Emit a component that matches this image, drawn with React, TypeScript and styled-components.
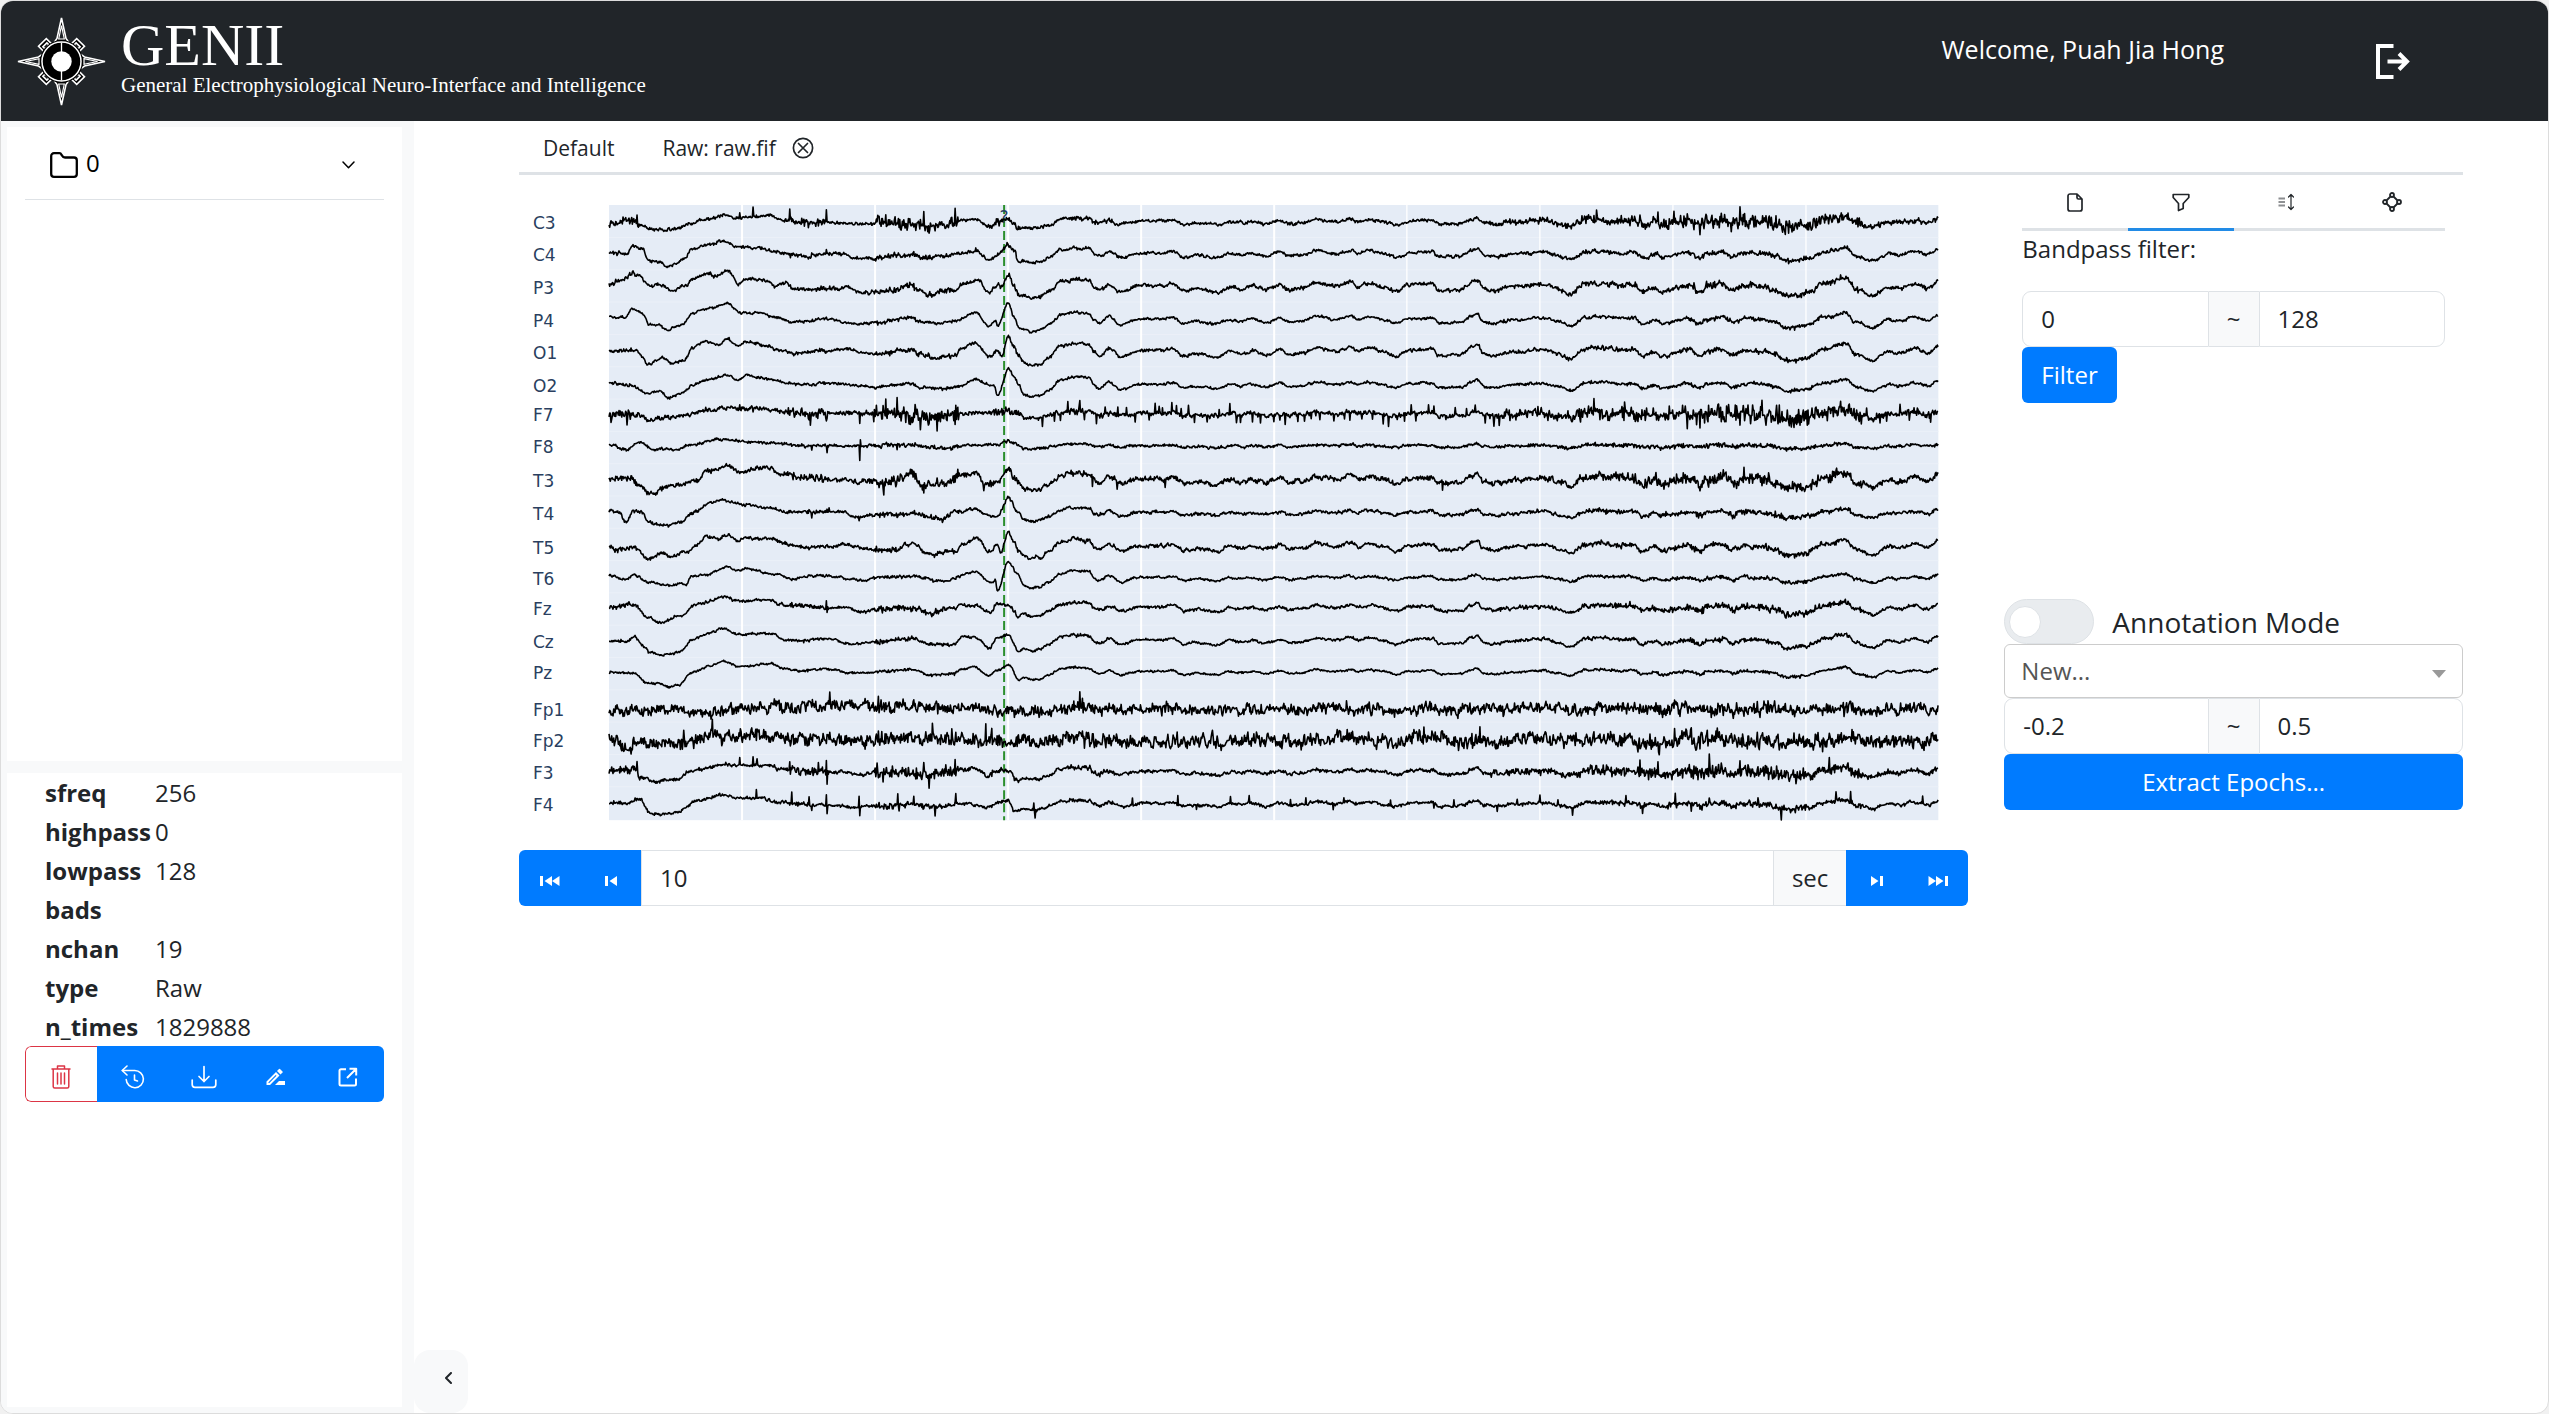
import React, { useState } from "react";
import styled, { createGlobalStyle, css } from "styled-components";

const GlobalStyle = createGlobalStyle`
  *, *::before, *::after { box-sizing: border-box; }
  body {
    margin: 0;
    background: #f1f1f1;
    color: #212529;
    font-family: "Open Sans", "Noto Sans", sans-serif;
    font-size: 24px;
    line-height: 36px;
  }
  button, input, select { font: inherit; color: inherit; margin: 0; }
  button { cursor: pointer; }
  svg { display: block; flex: none; }
`;

const blue = "#007bff";
const line = "#dee2e6";
const tint = "#f8f9fa";

/* ---------- shell ---------- */

const Frame = styled.div`
  min-height: 100vh;
  display: flex;
  flex-direction: column;
  background: #fff;
  border: 1px solid #dcdcdc;
  border-radius: 13px;
  overflow: hidden;
`;

const Header = styled.header`
  display: flex;
  align-items: center;
  height: 120px;
  padding: 0 138px 0 15px;
  background: #212529;
  color: #fff;
`;

const Brand = styled.div`
  margin-left: 14px;
  padding-bottom: 8px;
  font-family: "Liberation Serif", serif;
`;

const BrandName = styled.h1`
  margin: 0;
  font-size: 60px;
  font-weight: 400;
  line-height: 56px;
`;

const BrandTag = styled.p`
  margin: 0;
  font-size: 21px;
  line-height: 24px;
`;

const Welcome = styled.span`
  align-self: flex-start;
  margin: 30px 152px 0 auto;
  font-size: 25px;
`;

const IconButton = styled.button`
  display: flex;
  padding: 0;
  border: 0;
  background: none;
`;

const Body = styled.div`
  flex: 1;
  display: flex;
`;

/* ---------- sidebar ---------- */

const Sidebar = styled.aside`
  flex: none;
  display: flex;
  flex-direction: column;
  gap: 12px;
  width: 413px;
  padding: 6px 12px 6px 6px;
  background: ${tint};
`;

const Panel = styled.section`
  flex: 1 0 0;
  padding: 0 18px;
  background: #fff;
`;

const FolderToggle = styled.button`
  display: flex;
  align-items: center;
  gap: 8px;
  width: 100%;
  height: 73px;
  padding: 0 29px 0 25px;
  border: 0;
  border-bottom: 1px solid ${line};
  background: none;
  color: #000;

  span { flex: 1; text-align: left; }
  svg { margin-top: 3px; }
`;

const InfoTable = styled.table`
  margin-left: 20px;
  border-collapse: collapse;
  line-height: 39px;

  th, td { height: 39px; padding: 0; text-align: left; }
  th { width: 110px; font-weight: 700; }
`;

const ActionBar = styled.div`
  display: grid;
  grid-template-columns: repeat(5, 1fr);
  height: 56px;
  border-radius: 6px;
  overflow: hidden;
`;

const Action = styled.button<{ $danger?: boolean }>`
  display: flex;
  align-items: center;
  justify-content: center;
  padding: 6px 0 0;
  border: 0;
  background: ${blue};
  color: #fff;
  ${(p) =>
    p.$danger &&
    css`
      border: 1px solid #dc3545;
      border-right: 0;
      border-radius: 6px 0 0 6px;
      background: #fff;
      color: #dc3545;
    `}
`;

const Collapse = styled.button`
  flex: none;
  align-self: flex-end;
  display: flex;
  align-items: center;
  justify-content: center;
  width: 54px;
  height: 63px;
  padding: 0 0 7px 14px;
  border: 0;
  border-radius: 16px;
  background: ${tint};
`;

/* ---------- main ---------- */

const Main = styled.main`
  flex: 1;
  min-width: 0;
  padding: 0 85px 0 51px;
`;

const FileTabs = styled.div`
  display: flex;
  height: 54px;
  padding-top: 3px;
  border-bottom: 3px solid ${line};
  font-size: 21px;
`;

const FileTab = styled.div`
  display: flex;
  align-items: center;
  gap: 16px;
  padding: 0 24px;
`;

const TabText = styled.button`
  padding: 0;
  border: 0;
  background: none;
`;

const Workspace = styled.div`
  display: grid;
  grid-template-columns: minmax(0, 79fr) minmax(0, 25fr);
  column-gap: 36px;
  align-items: start;
`;

const Chart = styled.svg`
  width: 100%;
  height: auto;
  font-family: "DejaVu Sans", sans-serif;
  font-size: 17px;
`;

const Group = styled.div`
  display: flex;
  height: 56px;
`;

const Field = styled.input<{ $ends?: "left" | "right" | "none" }>`
  flex: 1;
  min-width: 0;
  padding: 0 18px;
  border: 1px solid ${line};
  background: #fff;
  border-radius: ${(p) =>
    p.$ends === "left" ? "9px 0 0 9px" : p.$ends === "right" ? "0 9px 9px 0" : "0"};
  outline: none;
`;

const Addon = styled.span`
  display: flex;
  align-items: center;
  padding: 0 18px;
  border: solid ${line};
  border-width: 1px 0;
  background: ${tint};
`;

const Step = styled.button<{ $side?: "left" | "right" }>`
  display: flex;
  align-items: center;
  justify-content: center;
  width: 61px;
  padding: 6px 0 0;
  border: 0;
  background: ${blue};
  color: #fff;
  border-radius: ${(p) =>
    p.$side === "left" ? "6px 0 0 6px" : p.$side === "right" ? "0 6px 6px 0" : "0"};
`;

const ToolPanel = styled.section`
  min-height: 424px;
  padding: 0 18px;
`;

const ToolTabs = styled.div`
  display: grid;
  grid-template-columns: repeat(4, 1fr);
`;

const ToolTab = styled.button<{ $active?: boolean }>`
  display: flex;
  align-items: center;
  justify-content: center;
  height: 56px;
  padding: 1px 0 0;
  border: 0;
  border-bottom: 3px solid ${(p) => (p.$active ? "#228be6" : line)};
  background: none;
`;

const Caption = styled.p`
  margin: 0 0 24px;
`;

const Primary = styled.button<{ $block?: boolean }>`
  display: block;
  width: ${(p) => (p.$block ? "100%" : "auto")};
  height: 56px;
  padding: 0 19px;
  border: 0;
  border-radius: 6px;
  background: ${blue};
  color: #fff;
`;

const SwitchLabel = styled.label`
  display: flex;
  align-items: center;
  gap: 18px;
  height: 45px;
  font-size: 28px;
`;

const Switch = styled.input`
  appearance: none;
  flex: none;
  display: flex;
  align-items: center;
  width: 90px;
  height: 45px;
  margin: 0;
  padding: 0 4px;
  border: 1px solid ${line};
  border-radius: 23px;
  background: #e9ecef;

  &::before {
    content: "";
    width: 32px;
    height: 32px;
    border: 1px solid ${line};
    border-radius: 50%;
    background: #fff;
  }
  &:checked { background: ${blue}; justify-content: flex-end; }
`;

const SelectBox = styled.div`
  position: relative;

  svg { position: absolute; right: 17px; top: 26px; pointer-events: none; }
`;

const Select = styled.select`
  appearance: none;
  display: block;
  width: 100%;
  height: 54px;
  padding: 0 16px;
  border: 1px solid #ccc;
  border-radius: 6px;
  background: #fff;
  color: #555;
`;

/* ---------- icons ---------- */

const stroke = (width: number) => ({
  fill: "none",
  stroke: "currentColor",
  strokeWidth: width,
  strokeLinecap: "round" as const,
  strokeLinejoin: "round" as const,
});

const Logo = () => (
  <svg width="91" height="91" viewBox="-45.5 -45.5 91 91" aria-hidden="true">
    {[45, 135, 225, 315].map((a) => (
      <g key={a} transform={`rotate(${a})`} fill="#000" stroke="#fff" strokeWidth="1.6">
        <path d="M-5.5 -17V-27H5.5V-17Z" />
        <path d="M-2.8 -20.5V-23.5H2.8V-20.5Z" fill="#212529" />
      </g>
    ))}
    {[0, 90, 180, 270].map((a) => (
      <g key={a} transform={`rotate(${a})`}>
        <path d="M-8 -18L-4.5 -23L0 -43.5L4.500 -23L8 -18Z" fill="#000" stroke="#fff" strokeWidth="1.6" />
        <path d="M-2.8 -22.5L0 -36L2.8 -22.5Z" fill="#212529" stroke="#fff" strokeWidth="1.2" />
      </g>
    ))}
    <circle r="21.5" fill="#000" />
    <circle r="19.5" fill="#000" stroke="#fff" strokeWidth="1.5" />
    <path d="M0 -19V19" stroke="#fff" strokeWidth="1.3" />
    <circle r="10.2" fill="#fff" />
  </svg>
);

const Logout = () => (
  <svg width="34" height="35" viewBox="0 0 34 35" fill="none" stroke="#fff" strokeWidth="4">
    <path d="M17.5 2H2V33H17.5" />
    <path d="M11.5 17.5H31M23 9.500L31 17.5L23 25.5" />
  </svg>
);

const Folder = () => (
  <svg width="28" height="26" viewBox="0 0 28 26" {...stroke(2.3)}>
    <path d="M1.2 4A2.8 2.8 0 0 1 4 1.2H9.5C12 1.2 11.5 5.5 15 5.5H24A2.8 2.8 0 0 1 26.8 8.3V22A2.8 2.8 0 0 1 24 24.8H4A2.8 2.8 0 0 1 1.2 22Z" />
  </svg>
);

const ChevronDown = () => (
  <svg width="13" height="8" viewBox="0 0 13 8" {...stroke(1.5)}>
    <path d="M1 1L6.500 6.800L12 1" />
  </svg>
);

const ChevronLeft = () => (
  <svg width="7" height="12" viewBox="0 0 7 12" {...stroke(2)}>
    <path d="M6 1L1 6L6 11" />
  </svg>
);

const CloseCircle = () => (
  <svg width="22" height="22" viewBox="0 0 22 22" {...stroke(1.7)}>
    <circle cx="11" cy="11" r="9.600" />
    <path d="M6.500 6.500L15.500 15.500M15.500 6.500L6.500 15.500" />
  </svg>
);

const Trash = () => (
  <svg width="20" height="24" viewBox="0 0 20 24" {...stroke(1.5)}>
    <path d="M1 4H19M6.500 4V1H13.500V4M2.200 4V21.500A1.500 1.500 0 0 0 3.700 23H16.300A1.500 1.500 0 0 0 17.800 21.500V4M6.500 8V19M10 8V19M13.500 8V19" />
  </svg>
);

const History = () => (
  <svg width="24" height="24" viewBox="0 0 24 24" {...stroke(1.6)}>
    <path d="M6 1L1.200 5.500L6 10" />
    <path d="M1.500 5.500H13.500A8.600 8.600 0 1 1 5.200 14.500" />
    <path d="M13.500 10V15L16.500 16" />
  </svg>
);

const Download = () => (
  <svg width="26" height="24" viewBox="0 0 26 24" {...stroke(1.7)}>
    <path d="M1.200 15V19.500A2.800 2.800 0 0 0 4 22.300H22A2.800 2.800 0 0 0 24.800 19.500V15M13 1.500V16.500M8 11.500L13 16.500L18 11.500" />
  </svg>
);

const Rename = () => (
  <svg width="20" height="18" viewBox="0 0 20 18" fill="currentColor">
    <path d="M0.500 13.500L10 4L13.500 7.500L4 17H0.500ZM2.500 15H3.300L10.500 7.700L9.700 6.900L2.500 14.200Z" fillRule="evenodd" />
    <path d="M11 3L13 1Q13.500 0.500 14 1L16.500 3.500Q17 4 16.500 4.500L14.500 6.500Z" />
    <path d="M9 17L13 13H19V17Z" />
  </svg>
);

const External = () => (
  <svg width="20" height="20" viewBox="0 0 20 20" {...stroke(2)} strokeLinecap="butt">
    <path d="M8 2.200H3A1.500 1.500 0 0 0 1.500 3.700V17A1.500 1.500 0 0 0 3 18.500H16.500A1.500 1.500 0 0 0 18 17V11.500M9 11L18 2M11.500 1.800H18.200V8.500" />
  </svg>
);

const FileIcon = () => (
  <svg width="16" height="19" viewBox="0 0 16 19" {...stroke(1.7)}>
    <path d="M1 3A2 2 0 0 1 3 1H10L15 6V16A2 2 0 0 1 13 18H3A2 2 0 0 1 1 16ZM10 1V4.500A1.500 1.500 0 0 0 11.500 6H15" />
  </svg>
);

const Funnel = () => (
  <svg width="18" height="19" viewBox="0 0 18 19" {...stroke(1.7)}>
    <path d="M1.200 1.500H16.800V4.500L11.200 10.500V15.500L6.500 17.500V10.500L1.200 4.500Z" />
  </svg>
);

const Spacing = () => (
  <svg width="17" height="18" viewBox="0 0 17 18" {...stroke(1.2)}>
    <path d="M0.500 5.500H7M0.500 12.500H7" strokeWidth="1.800" stroke="#8b8d90" strokeLinecap="butt" />
    <path d="M0.500 9H7" strokeLinecap="butt" />
    <path d="M13 2V16M10.500 4L13 1.500L15.500 4M10.500 14L13 16.500L15.500 14" />
  </svg>
);

const Nodes = () => (
  <svg width="20" height="20" viewBox="0 0 20 20" {...stroke(1.8)}>
    <circle cx="10" cy="3" r="2" />
    <circle cx="10" cy="17" r="2" />
    <circle cx="3" cy="10" r="2" />
    <circle cx="17" cy="10" r="2" />
    <path d="M8.500 4.500L4.500 8.500M11.500 4.500L15.500 8.500M4.500 11.500L8.500 15.500M15.500 11.500L11.500 15.500" />
  </svg>
);

const Skip = ({ far, forward }: { far?: boolean; forward?: boolean }) => (
  <svg
    width={far ? 20 : 12}
    height="10"
    viewBox={far ? "0 0 20 10" : "0 0 12 10"}
    fill="currentColor"
  >
    <g transform={forward ? `translate(${far ? 20 : 12} 0) scale(-1 1)` : undefined}>
      <path d="M0 0H3V10H0ZM12 0V10L4.500 5Z" />
      {far && <path d="M19.500 0V10L12 5Z" />}
    </g>
  </svg>
);

const Caret = () => (
  <svg width="14" height="8" viewBox="0 0 14 8" fill="#999">
    <path d="M0 0H14L7 8Z" />
  </svg>
);

/* ---------- EEG chart ---------- */

type Point = [number, number];

type Channel = {
  name: string;
  y: number;
  onset: string;
  event: number;
  late: number;
  noise: number;
  burst: number;
  spikes?: string;
  beat?: number;
};

const SAMPLES = 3987;
const SCALE = 3;

const parse = (text: string): Point[] =>
  text
    .trim()
    .split(/\s+/)
    .map((pair) => pair.split(":").map(Number) as Point);

const EVENT = parse(
  "1243:-28 1265:-37 1290:-33 1320:-14 1355:16 1395:25 1440:22 1455:0 1470:-10 1500:10 1535:-14"
);

const LATE = parse(
  "1590:4 1660:4 1690:10 1725:-12 1760:-4 1825:-14 1860:2 1900:-4 1930:4 1965:-8 2015:6 2040:-8 2080:-3 2120:12 2180:2 2225:14 2245:2 2280:12 2320:2 2360:-12 2400:4 2450:8 2470:8 2490:-10 2555:-8 2590:14 2604:20 2623:-5 2656:-10 2706:0 2806:8 2845:-5 2884:-20 2928:8 2961:12 3039:5 3072:8 3100:-12 3139:0 3155:-12 3239:5 3274:-12 3294:4 3339:8 3372:-8 3405:6 3461:2 3494:-5 3533:-26 3588:-18 3649:10 3711:24 3738:-6 3788:-25 3838:2 3870:-4 3916:10 3955:-3 3987:18"
);

/* Muscle activity: [start, end, strength]. */
const BURSTS: [number, number, number][] = [
  [0, 95, 0.5],
  [535, 660, 0.55],
  [795, 910, 0.9],
  [910, 1050, 0.8],
  [1140, 1230, 0.4],
  [1380, 1520, 0.3],
  [2640, 2900, 0.4],
  [2900, 3220, 0.75],
  [3220, 3600, 1],
  [3600, 3760, 0.7],
  [3760, 3987, 0.3],
];

const CHANNELS: Channel[] = [
  { name: "C3", y: 222, event: 0.5, late: 0.6, noise: 2.5, burst: 10,
    onset: "0:0 60:5 80:5 90:-10 130:-23 200:-22 240:-5 290:8 350:20 390:12 440:17 490:19 510:8 540:5 555:-2 650:0 700:-5 790:-5 800:-2 930:-8 960:-12 1000:-5 1060:5 1100:8 1140:-13 1165:0 1200:8 1215:0 1222:-18",
    spikes: "84:25 86:-20 392:12 432:28 542:32 598:-18 652:34 806:22 830:18 858:20 945:25 960:-22 1038:38 2962:26 3092:25 3147:34 3195:32 3273:-28 3290:28 3392:42 3480:24 3520:-20" },
  { name: "C4", y: 254, event: 0.75, late: 0.8, noise: 2.5, burst: 3,
    onset: "0:3 55:0 70:25 100:15 120:-20 150:-25 175:-38 200:-27 225:-15 250:15 300:28 340:40 390:22 450:18 500:8 540:0 600:-8 640:2 700:0 740:-12 790:-14 850:-5 910:-2 940:-10 990:-8 1050:0 1100:10 1140:-20 1170:0 1195:27 1215:12 1228:-25",
    spikes: "545:-14 608:12 652:14 868:10 915:12 1100:12" },
  { name: "P3", y: 287, event: 0.95, late: 1.1, noise: 3, burst: 4.5,
    onset: "0:5 40:20 70:42 90:35 120:3 150:5 185:-10 230:5 250:20 290:40 320:35 355:47 387:12 410:25 480:18 500:3 530:12 560:-10 650:-5 720:0 750:-18 830:-12 910:3 930:-10 965:-22 1010:-10 1040:-12 1060:8 1105:22 1140:-15 1165:8 1175:-2 1198:38 1215:5 1228:-25" },
  { name: "P4", y: 320, event: 0.95, late: 0.9, noise: 2, burst: 2.5,
    onset: "0:10 50:8 70:33 100:22 120:-12 150:-15 175:-33 200:-20 225:-10 250:20 300:35 355:50 390:22 450:22 500:8 550:-5 600:-5 640:5 740:-12 800:-8 910:8 930:-5 990:-12 1040:-3 1100:22 1140:-20 1160:0 1165:-18 1198:50 1215:10 1228:-20" },
  { name: "O1", y: 352, event: 1.1, late: 1.1, noise: 2.5, burst: 3,
    onset: "0:3 80:5 120:-35 160:-15 185:-35 225:-25 250:12 290:30 330:20 355:40 387:15 405:32 480:18 500:5 560:-3 640:3 720:10 760:-2 800:-5 910:8 930:-7 980:-18 1035:-12 1060:12 1100:28 1140:-15 1165:3 1178:-12 1198:47 1215:15 1228:-10" },
  { name: "O2", y: 385, event: 1, late: 0.75, noise: 2, burst: 2,
    onset: "0:6 60:0 120:-25 155:-17 180:-37 215:-25 250:0 300:18 355:30 385:15 410:30 480:18 540:5 600:0 640:8 740:0 800:-5 910:5 930:-5 990:-10 1050:-5 1100:18 1130:5 1155:-3 1165:-32 1198:50 1215:25 1228:5" },
  { name: "F7", y: 414, event: 0.35, late: 0.5, noise: 3.5, burst: 13, beat: 31,
    onset: "0:0 90:-3 120:-20 200:-7 250:2 300:12 360:18 450:18 540:5 700:3 790:3 950:-5 1100:3 1200:7 1228:-3",
    spikes: "6:-28 55:-28 392:14 432:-14 600:-20 605:-28 652:-20 752:-34 795:-24 830:30 864:30 900:-26 918:40 935:-26 958:-32 984:-28 1038:-44 1041:24 3273:-30 3458:38" },
  { name: "F8", y: 446, event: 0.25, late: 0.35, noise: 2.2, burst: 3,
    onset: "0:5 55:-10 95:12 130:-10 200:-10 250:5 320:20 400:14 500:8 600:0 700:0 900:3 1000:-5 1100:4 1160:3 1198:15 1228:3",
    spikes: "608:-14 655:-16 752:-46 754:18 865:-16" },
  { name: "T3", y: 480, event: 0.85, late: 0.95, noise: 4, burst: 8,
    onset: "0:3 65:3 90:-15 128:-42 160:-25 230:-10 270:2 290:30 355:40 390:25 480:37 510:20 560:8 650:5 790:-5 860:-5 905:18 940:-15 1000:-12 1050:15 1105:20 1130:-15 1170:0 1198:38 1215:10 1228:-5",
    spikes: "825:-26 862:-20 945:-18 1038:-20 1125:-18 1450:-26 1525:-22 1668:-24 2500:-24 3273:-40 3405:28 3478:26" },
  { name: "T4", y: 513, event: 0.65, late: 0.6, noise: 2.5, burst: 3.5,
    onset: "0:5 30:3 50:-27 72:5 98:3 120:-30 170:-38 210:-28 260:5 300:30 340:38 400:28 470:18 540:2 640:4 700:4 740:-12 800:-4 910:-2 1000:-18 1040:5 1100:12 1130:-3 1165:-12 1198:47 1228:0",
    spikes: "608:-16 661:16 750:-14" },
  { name: "T5", y: 547, event: 0.95, late: 0.95, noise: 2.8, burst: 3.5,
    onset: "0:0 20:-10 70:0 120:-35 160:-15 185:-28 230:-15 270:10 290:30 330:25 355:40 387:15 405:28 480:25 560:3 640:0 720:8 790:-8 860:-5 910:10 960:-20 1040:-12 1060:10 1103:25 1140:-15 1165:8 1175:-18 1198:48 1215:12 1228:-8" },
  { name: "T6", y: 578, event: 0.85, late: 0.55, noise: 1.8, burst: 2,
    onset: "0:7 50:-5 75:10 120:-13 180:-23 215:-15 232:-20 245:5 290:10 355:35 385:22 410:27 500:12 550:-2 640:8 760:-7 800:0 910:5 1000:-10 1100:18 1150:-15 1158:-5 1165:-35 1198:48 1228:8" },
  { name: "Fz", y: 608, event: 0.65, late: 0.75, noise: 2.5, burst: 4.5,
    onset: "0:0 75:10 120:-30 150:-43 220:-22 260:10 300:20 340:35 390:20 490:25 510:10 560:8 720:0 750:-12 850:0 920:0 960:-15 1020:0 1070:8 1100:8 1145:-15 1160:12 1200:8 1215:-5 1225:-28",
    spikes: "652:20 654:-16" },
  { name: "Cz", y: 641, event: 0.75, late: 0.85, noise: 2, burst: 3,
    onset: "0:2 55:0 75:12 110:-20 120:-35 180:-40 215:-30 250:5 300:22 340:38 390:20 490:22 520:5 570:0 640:8 740:-8 800:-2 915:8 960:-10 1035:-10 1060:15 1100:12 1140:-20 1165:12 1200:18 1228:-33" },
  { name: "Pz", y: 672, event: 0.6, late: 0.6, noise: 1.6, burst: 1.8,
    onset: "0:0 70:-3 120:-35 150:-33 180:-45 210:-38 250:0 300:18 345:33 385:18 490:25 520:10 580:3 640:10 740:-3 910:8 960:-8 1030:-5 1060:8 1100:15 1140:-12 1160:3 1200:22 1228:-22" },
  { name: "Fp1", y: 709, event: 0.2, late: 0.3, noise: 9, burst: 5,
    onset: "0:0 90:-5 150:2 230:0 250:-22 300:-10 400:0 560:6 1100:6 1140:-5 1228:0",
    spikes: "663:38 808:22 918:20 1395:22 1412:36 1420:24 1444:30 2633:22 3704:-26" },
  { name: "Fp2", y: 740, event: 0.2, late: 0.3, noise: 11, burst: 6,
    onset: "0:8 55:-27 80:0 130:-8 200:-15 250:0 340:12 480:12 600:0 900:0 1100:0 1228:0",
    spikes: "225:20 310:26 360:22 655:30 808:30 950:28 970:36 1028:32 1131:36 1148:28 1260:24 1375:26 1426:-34 1484:28 2445:36 2588:34 2612:30 3196:26" },
  { name: "F3", y: 772, event: 0.6, late: 0.6, noise: 2.8, burst: 10,
    onset: "0:0 80:10 90:-15 140:-28 200:-22 250:5 340:22 490:20 510:8 550:5 720:0 750:-8 800:0 950:-8 1060:8 1100:10 1135:-12 1160:5 1200:5 1228:-25",
    spikes: "84:26 392:22 432:26 444:18 542:28 600:-16 628:22 652:34 655:-36 805:28 822:-26 860:26 945:38 960:-34 1038:34 1041:-28 3092:38 3147:38 3301:38 3392:36 3660:30" },
  { name: "F4", y: 804, event: 0.5, late: 0.6, noise: 2.5, burst: 4,
    onset: "0:3 55:3 75:15 95:15 120:-25 170:-30 210:-22 260:10 340:28 390:20 450:18 510:5 640:-3 750:-10 900:-2 980:-8 1080:2 1140:-10 1170:8 1200:10 1215:-20 1225:-22",
    spikes: "443:28 548:34 600:26 608:-18 652:34 654:-22 750:34 752:-26 866:26 870:-22 914:22 978:-26 1040:32 1275:24 1278:-24 1570:18 1706:26 1762:-12 1865:18 1920:18 2045:20 2090:18 2172:-20 2204:16 2345:16 2475:-18 2535:18 2665:-20 2725:18 2793:24 2847:24 2890:-22 3051:24 3100:-16 3198:32 3246:-20 3301:24 3446:20 3517:-30 3681:20 3724:28 3940:20" },
];

const random = (seed: number) => () => {
  seed = (seed + 0x6d2b79f5) | 0;
  let t = Math.imul(seed ^ (seed >>> 15), 1 | seed);
  t = (t + Math.imul(t ^ (t >>> 7), 61 | t)) ^ t;
  return ((t ^ (t >>> 14)) >>> 0) / 4294967296;
};

const trace = (channel: Channel, index: number) => {
  const rand = random(index * 977 + 13);
  const keys: Point[] = [
    ...parse(channel.onset),
    ...EVENT.map(([s, v]): Point => [s, v * channel.event]),
    ...LATE.map(([s, v]): Point => [s, v * channel.late]),
  ];
  const spikes = channel.spikes ? parse(channel.spikes) : [];
  let k = 0;
  let drift = 0;
  let nextBeat = 1300;
  let path = "";
  for (let s = 0; s <= SAMPLES; s += 2) {
    while (k < keys.length - 2 && keys[k + 1][0] <= s) k++;
    const [s0, v0] = keys[k];
    const [s1, v1] = keys[k + 1];
    const t = Math.min(1, Math.max(0, (s - s0) / (s1 - s0)));
    let value = v0 + (v1 - v0) * t * t * (3 - 2 * t);

    drift = drift * 0.65 + (rand() - 0.5) * channel.noise * 2;
    value += drift + (rand() - 0.5) * channel.noise * 2.4;

    const burst = BURSTS.find(([from, to]) => s >= from && s < to);
    if (burst) {
      const r = rand() * 2 - 1;
      value += r * Math.abs(r) * channel.burst * burst[2] * 2.2;
    }
    for (const [at, height] of spikes) {
      if (at === s || at === s + 1) value += height;
    }
    if (channel.beat && s >= nextBeat) {
      value += (rand() > 0.35 ? -1 : 1) * (16 + rand() * 12);
      nextBeat = s + channel.beat * (0.3 + rand());
    }
    path += `${s ? "L" : "M"}${(s / SCALE).toFixed(1)} ${(-value / SCALE).toFixed(1)}`;
  }
  return path;
};

const TRACES = CHANNELS.map(trace);
const SECONDS = [1, 2, 3, 4, 5, 6, 7, 8, 9];

const EegChart = () => (
  <Chart viewBox="0 0 1449 675" role="img" aria-label="EEG recording">
    <rect x="90" y="30" width="1329" height="615" fill="#e5ecf6" />
    {CHANNELS.slice(1).map((c, i) => (
      <rect key={c.name} x="90" y={62 + i * 32.3} width="1329" height="1" fill="#ebf0f8" />
    ))}
    {SECONDS.map((s) => (
      <rect key={s} x={89 + s * 133} y="30" width={s < 6 ? 2 : 1.3} height="615" fill="#fff" />
    ))}
    <path d="M485 30V645" stroke="#2c8f2c" strokeWidth="2" strokeDasharray="9 4" />
    <text x="485" y="48" textAnchor="middle" fill="#2a3f5f" fontSize="17">?</text>
    {CHANNELS.map((c, i) => (
      <g key={c.name} transform={`translate(0 ${c.y - 175})`}>
        <text x="14" y="7" fill="#2a3f5f">{c.name}</text>
        <path transform="translate(90 0)" d={TRACES[i]} fill="none" stroke="#000" strokeWidth="1.6" strokeLinejoin="round" />
      </g>
    ))}
  </Chart>
);

/* ---------- page ---------- */

const INFO: [string, string][] = [
  ["sfreq", "256"],
  ["highpass", "0"],
  ["lowpass", "128"],
  ["bads", ""],
  ["nchan", "19"],
  ["type", "Raw"],
  ["n_times", "1829888"],
];

const TOOLS = [
  { label: "File", icon: <FileIcon /> },
  { label: "Filter", icon: <Funnel /> },
  { label: "Spacing", icon: <Spacing /> },
  { label: "Montage", icon: <Nodes /> },
];

export default function App() {
  const [tool, setTool] = useState("Filter");

  return (
    <>
      <GlobalStyle />
      <Frame>
        <Header>
          <Logo />
          <Brand>
            <BrandName>GENII</BrandName>
            <BrandTag>General Electrophysiological Neuro-Interface and Intelligence</BrandTag>
          </Brand>
          <Welcome>Welcome, Puah Jia Hong</Welcome>
          <IconButton aria-label="Log out"><Logout /></IconButton>
        </Header>
        <Body>
          <Sidebar>
            <Panel>
              <FolderToggle>
                <Folder />
                <span>0</span>
                <ChevronDown />
              </FolderToggle>
            </Panel>
            <Panel>
              <InfoTable>
                <tbody>
                  {INFO.map(([key, value]) => (
                    <tr key={key}>
                      <th scope="row">{key}</th>
                      <td>{value}</td>
                    </tr>
                  ))}
                </tbody>
              </InfoTable>
              <ActionBar>
                <Action $danger aria-label="Delete"><Trash /></Action>
                <Action aria-label="History"><History /></Action>
                <Action aria-label="Download"><Download /></Action>
                <Action aria-label="Rename"><Rename /></Action>
                <Action aria-label="Open"><External /></Action>
              </ActionBar>
            </Panel>
          </Sidebar>
          <Collapse aria-label="Collapse sidebar"><ChevronLeft /></Collapse>
          <Main>
            <FileTabs>
              <FileTab><TabText>Default</TabText></FileTab>
              <FileTab>
                <TabText>Raw: raw.fif</TabText>
                <IconButton aria-label="Close raw.fif"><CloseCircle /></IconButton>
              </FileTab>
            </FileTabs>
            <Workspace>
              <div>
                <EegChart />
                <Group>
                  <Step $side="left" aria-label="First"><Skip far /></Step>
                  <Step aria-label="Previous"><Skip /></Step>
                  <Field aria-label="Window length" defaultValue="10" />
                  <Addon>sec</Addon>
                  <Step aria-label="Next"><Skip forward /></Step>
                  <Step $side="right" aria-label="Last"><Skip far forward /></Step>
                </Group>
              </div>
              <div>
                <ToolPanel>
                  <ToolTabs>
                    {TOOLS.map((t) => (
                      <ToolTab
                        key={t.label}
                        $active={t.label === tool}
                        aria-label={t.label}
                        onClick={() => setTool(t.label)}
                      >
                        {t.icon}
                      </ToolTab>
                    ))}
                  </ToolTabs>
                  <Caption>Bandpass filter:</Caption>
                  <Group>
                    <Field $ends="left" aria-label="Low cut" defaultValue="0" />
                    <Addon>~</Addon>
                    <Field $ends="right" aria-label="High cut" defaultValue="128" />
                  </Group>
                  <Primary>Filter</Primary>
                </ToolPanel>
                <SwitchLabel>
                  <Switch type="checkbox" />
                  Annotation Mode
                </SwitchLabel>
                <SelectBox>
                  <Select aria-label="Annotation" defaultValue="new">
                    <option value="new">New...</option>
                  </Select>
                  <Caret />
                </SelectBox>
                <Group>
                  <Field $ends="left" aria-label="Epoch start" defaultValue="-0.2" />
                  <Addon>~</Addon>
                  <Field $ends="right" aria-label="Epoch end" defaultValue="0.5" />
                </Group>
                <Primary $block>Extract Epochs...</Primary>
              </div>
            </Workspace>
          </Main>
        </Body>
      </Frame>
    </>
  );
}
